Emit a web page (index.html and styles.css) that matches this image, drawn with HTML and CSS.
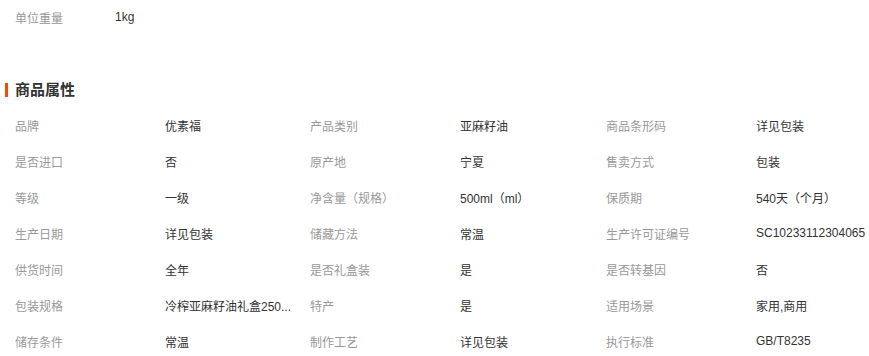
FILE: index.html
```html
<!DOCTYPE html>
<html lang="zh-CN">
<head>
<meta charset="utf-8">
<link rel="stylesheet" href="styles.css">
</head>
<body>
<div class="page">
  <div class="weight">
    <span class="w-label">单位重量</span>
    <span class="w-value">1kg</span>
  </div>
  <h2 class="heading">商品属性</h2>
  <div class="attrs">
    <div class="lbl">品牌</div><div class="val">优素福</div>
    <div class="lbl">产品类别</div><div class="val">亚麻籽油</div>
    <div class="lbl">商品条形码</div><div class="val">详见包装</div>

    <div class="lbl">是否进口</div><div class="val">否</div>
    <div class="lbl">原产地</div><div class="val">宁夏</div>
    <div class="lbl">售卖方式</div><div class="val">包装</div>

    <div class="lbl">等级</div><div class="val">一级</div>
    <div class="lbl">净含量（规格）</div><div class="val">500ml（ml）</div>
    <div class="lbl">保质期</div><div class="val">540天（个月）</div>

    <div class="lbl">生产日期</div><div class="val">详见包装</div>
    <div class="lbl">储藏方法</div><div class="val">常温</div>
    <div class="lbl">生产许可证编号</div><div class="val">SC10233112304065</div>

    <div class="lbl">供货时间</div><div class="val">全年</div>
    <div class="lbl">是否礼盒装</div><div class="val">是</div>
    <div class="lbl">是否转基因</div><div class="val">否</div>

    <div class="lbl">包装规格</div><div class="val">冷榨亚麻籽油礼盒250...</div>
    <div class="lbl">特产</div><div class="val">是</div>
    <div class="lbl">适用场景</div><div class="val">家用,商用</div>

    <div class="lbl">储存条件</div><div class="val">常温</div>
    <div class="lbl">制作工艺</div><div class="val">详见包装</div>
    <div class="lbl">执行标准</div><div class="val">GB/T8235</div>
  </div>
</div>
</body>
</html>
```

FILE: styles.css
```css
* { box-sizing: border-box; }
html, body {
  margin: 0;
  padding: 0;
  background: #fff;
}
body {
  font-family: "Liberation Sans", Arial, "Noto Sans CJK SC", sans-serif;
  font-size: 12px;
  color: #333;
}
.page {
  padding-left: 15px;
}
.weight {
  display: flex;
  height: 34px;
  align-items: center;
}
.w-label {
  width: 100px;
  color: #999;
}
.w-value {
  color: #333;
}
.heading {
  margin: 46px 0 0 -10px;
  height: 20px;
  display: flex;
  align-items: center;
  font-size: 15px;
  font-weight: bold;
  color: #333;
  line-height: 20px;
}
.heading::before {
  content: "";
  display: block;
  width: 3px;
  height: 14px;
  background: #ff4400;
  margin-right: 7px;
}
.attrs {
  margin-top: 7px;
  display: grid;
  grid-template-columns: 150px 145px 150px 146px 150px auto;
  grid-auto-rows: 36px;
  align-items: center;
}
.lbl {
  color: #999;
  white-space: nowrap;
}
.val {
  color: #333;
  white-space: nowrap;
}
```
